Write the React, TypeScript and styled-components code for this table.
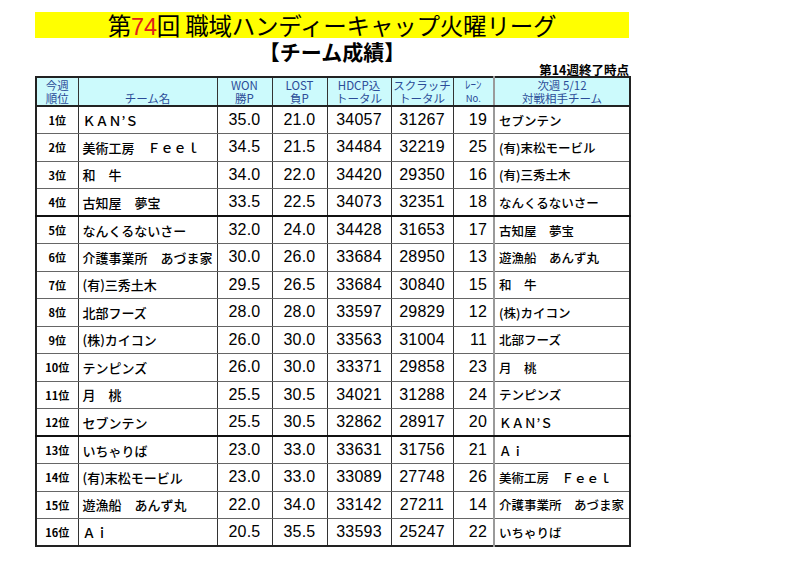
import React from "react";
import styled, { createGlobalStyle } from "styled-components";

const Global = createGlobalStyle`
  html, body { margin: 0; padding: 0; background: #ffffff; }
  body { font-family: "Noto Sans CJK JP", "Liberation Sans", sans-serif; color: #000; }
`;

const Page = styled.div`
  width: 594px;
  padding: 12px 0 0 35px;
  display: flex;
  flex-direction: column;
`;

const Banner = styled.h1`
  margin: 0;
  height: 26px;
  background: #ffff00;
  font-size: 23.5px;
  line-height: 26px;
  font-weight: 400;
  text-align: center;
  letter-spacing: -0.2px;
`;

const Red = styled.span`
  color: #e0201a;
  font-family: "Liberation Sans", sans-serif;
`;

const Subtitle = styled.h2`
  margin: 0;
  height: 25px;
  font-size: 21px;
  line-height: 27px;
  font-weight: 700;
  text-align: center;
`;

const AsOf = styled.div`
  height: 13px;
  font-size: 12.5px;
  line-height: 14px;
  font-weight: 700;
  text-align: right;
`;

const Table = styled.table`
  border-collapse: collapse;
  table-layout: fixed;
  width: 594px;
  border: 2px solid #222;
`;

const Col = styled.col<{ $w: number }>`
  width: ${(p) => p.$w}px;
`;

const HeadCell = styled.th<{ $sep?: boolean }>`
  height: 25px;
  padding: 0 0 1px;
  background: #ccfafc;
  color: #2b4c98;
  font-weight: 400;
  font-size: 11.5px;
  line-height: 12.5px;
  text-align: center;
  vertical-align: bottom;
  border-left: ${(p) => (p.$sep ? "2px solid #9a9a9a" : "1px solid #333")};
  border-bottom: 2px solid #222;
  white-space: nowrap;
  overflow: hidden;
`;

const Small = styled.span<{ $size: number }>`
  font-size: ${(p) => p.$size}px;
`;

const Row = styled.tr<{ $thick?: boolean }>`
  height: 27.5px;
  & > td {
    border-bottom: ${(p) => (p.$thick ? "2px solid #111" : "1px solid #666")};
  }
`;

const Cell = styled.td<{ $sep?: boolean }>`
  padding: 0;
  border-left: ${(p) => (p.$sep ? "2px solid #9a9a9a" : "1px solid #333")};
  white-space: nowrap;
  overflow: hidden;
`;

const RankCell = styled(Cell)`
  text-align: center;
  font-size: 11px;
  font-weight: 700;
`;

const NameCell = styled(Cell)`
  padding-left: 4px;
  font-size: 13px;
  font-weight: 500;
`;

const NumCell = styled(Cell)`
  text-align: center;
  font-family: "Liberation Sans", sans-serif;
  font-size: 16px;
  letter-spacing: 0.2px;
`;

const LaneCell = styled(NumCell)`
  text-align: right;
  padding-right: 6px;
`;

const OppCell = styled(Cell)`
  padding-left: 4px;
  font-size: 12.5px;
  font-weight: 500;
`;

type Team = {
  rank: number;
  name: string;
  won: string;
  lost: string;
  hdcp: number;
  scratch: number;
  lane: number;
  opp: string;
};

const teams: Team[] = [
  { rank: 1, name: "ＫＡＮ’Ｓ", won: "35.0", lost: "21.0", hdcp: 34057, scratch: 31267, lane: 19, opp: "セブンテン" },
  { rank: 2, name: "美術工房　Ｆｅｅｌ", won: "34.5", lost: "21.5", hdcp: 34484, scratch: 32219, lane: 25, opp: "(有)末松モービル" },
  { rank: 3, name: "和　牛", won: "34.0", lost: "22.0", hdcp: 34420, scratch: 29350, lane: 16, opp: "(有)三秀土木" },
  { rank: 4, name: "古知屋　夢宝", won: "33.5", lost: "22.5", hdcp: 34073, scratch: 32351, lane: 18, opp: "なんくるないさー" },
  { rank: 5, name: "なんくるないさー", won: "32.0", lost: "24.0", hdcp: 34428, scratch: 31653, lane: 17, opp: "古知屋　夢宝" },
  { rank: 6, name: "介護事業所　あづま家", won: "30.0", lost: "26.0", hdcp: 33684, scratch: 28950, lane: 13, opp: "遊漁船　あんず丸" },
  { rank: 7, name: "(有)三秀土木", won: "29.5", lost: "26.5", hdcp: 33684, scratch: 30840, lane: 15, opp: "和　牛" },
  { rank: 8, name: "北部フーズ", won: "28.0", lost: "28.0", hdcp: 33597, scratch: 29829, lane: 12, opp: "(株)カイコン" },
  { rank: 9, name: "(株)カイコン", won: "26.0", lost: "30.0", hdcp: 33563, scratch: 31004, lane: 11, opp: "北部フーズ" },
  { rank: 10, name: "テンピンズ", won: "26.0", lost: "30.0", hdcp: 33371, scratch: 29858, lane: 23, opp: "月　桃" },
  { rank: 11, name: "月　桃", won: "25.5", lost: "30.5", hdcp: 34021, scratch: 31288, lane: 24, opp: "テンピンズ" },
  { rank: 12, name: "セブンテン", won: "25.5", lost: "30.5", hdcp: 32862, scratch: 28917, lane: 20, opp: "ＫＡＮ’Ｓ" },
  { rank: 13, name: "いちゃりば", won: "23.0", lost: "33.0", hdcp: 33631, scratch: 31756, lane: 21, opp: "Ａｉ" },
  { rank: 14, name: "(有)末松モービル", won: "23.0", lost: "33.0", hdcp: 33089, scratch: 27748, lane: 26, opp: "美術工房　Ｆｅｅｌ" },
  { rank: 15, name: "遊漁船　あんず丸", won: "22.0", lost: "34.0", hdcp: 33142, scratch: 27211, lane: 14, opp: "介護事業所　あづま家" },
  { rank: 16, name: "Ａｉ", won: "20.5", lost: "35.5", hdcp: 33593, scratch: 25247, lane: 22, opp: "いちゃりば" },
];

const widths = [42, 139, 55, 55, 64, 62, 41, 136];

export default function App() {
  return (
    <>
      <Global />
      <Page>
        <Banner>
          第<Red>74</Red>回 職域ハンディーキャップ火曜リーグ
        </Banner>
        <Subtitle>【チーム成績】</Subtitle>
        <AsOf>第14週終了時点</AsOf>
        <Table>
          <colgroup>
            {widths.map((w, i) => (
              <Col key={i} $w={w} />
            ))}
          </colgroup>
          <thead>
            <tr>
              <HeadCell>今週<br />順位</HeadCell>
              <HeadCell>チーム名</HeadCell>
              <HeadCell>WON<br />勝P</HeadCell>
              <HeadCell>LOST<br />負P</HeadCell>
              <HeadCell>HDCP込<br />トータル</HeadCell>
              <HeadCell>スクラッチ<br />トータル</HeadCell>
              <HeadCell><Small $size={11}>ﾚｰﾝ</Small><br /><Small $size={9.5}>No.</Small></HeadCell>
              <HeadCell $sep>次週 5/12<br />対戦相手チーム</HeadCell>
            </tr>
          </thead>
          <tbody>
            {teams.map((t) => (
              <Row key={t.rank} $thick={t.rank === 4 || t.rank === 12}>
                <RankCell>{t.rank}位</RankCell>
                <NameCell>{t.name}</NameCell>
                <NumCell>{t.won}</NumCell>
                <NumCell>{t.lost}</NumCell>
                <NumCell>{t.hdcp}</NumCell>
                <NumCell>{t.scratch}</NumCell>
                <LaneCell>{t.lane}</LaneCell>
                <OppCell $sep>{t.opp}</OppCell>
              </Row>
            ))}
          </tbody>
        </Table>
      </Page>
    </>
  );
}
